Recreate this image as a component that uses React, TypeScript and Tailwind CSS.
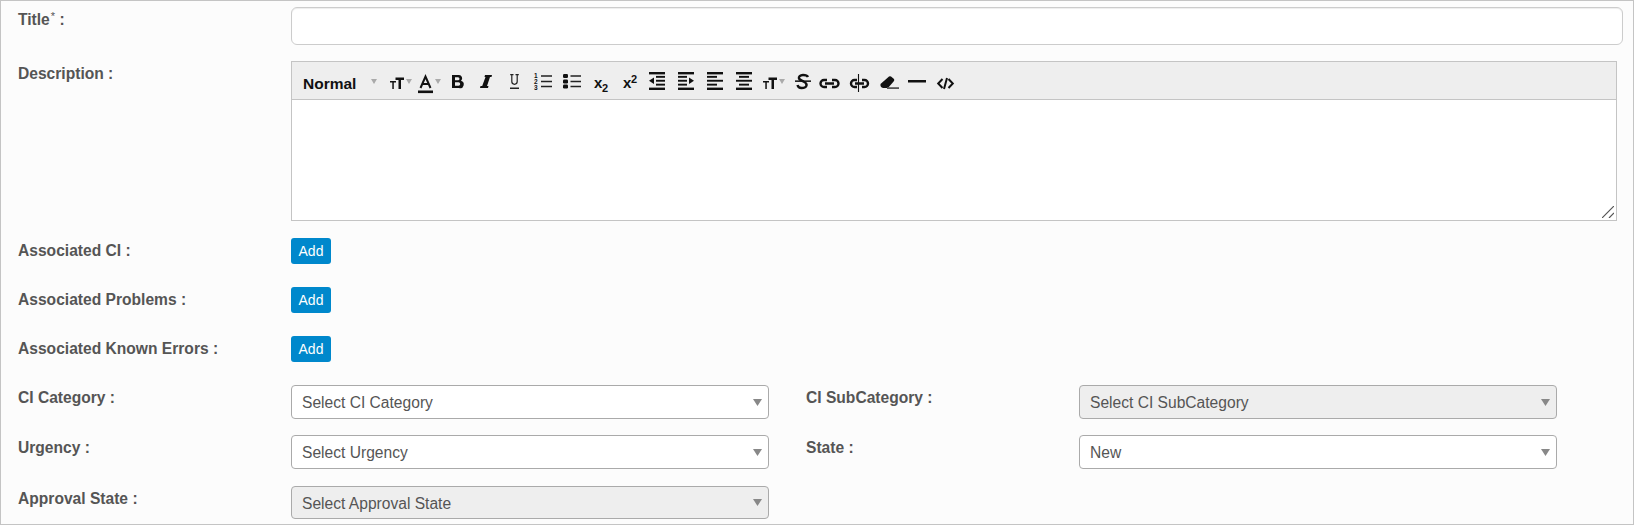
import React from "react";

const I = ({ w, className = "", children }: { w: number; className?: string; children: React.ReactNode }) => (
  <svg width={w} height="18" viewBox={`0 0 ${w} 18`} fill="none" className={`block shrink-0 overflow-visible ${className}`}>{children}</svg>
);
const Caret = ({ className = "" }: { className?: string }) => (
  <svg width="6" height="5" viewBox="0 0 6 5" className={`block shrink-0 ${className}`}><path d="M0 0h6L3 5z" fill="#aaa" /></svg>
);
const TTPaths = () => (
  <>
    <path d="M5.500 5.500H14v2.400h-3V17H8.500V7.900h-3z" fill="#111" />
    <path d="M0 9h6v1.500H3.800V17H2.300v-6.500H0z" fill="#111" />
  </>
);
const Lines = ({ rows }: { rows: [number, number][] }) => (
  <>{rows.map(([x, w], i) => <rect key={i} x={x} y={i * 3.9} width={w} height={i === 0 || i === 4 ? 2.4 : 1.9} fill="#111" />)}</>
);

const Label = ({ children, className = "" }: { children: React.ReactNode; className?: string }) => (
  <div className={`text-[15.6px] leading-[20px] font-bold text-[#555] ${className}`}>{children}</div>
);
const AddRow = ({ label, className = "" }: { label: string; className?: string }) => (
  <div className={`flex ${className}`}>
    <Label className="w-[273px] pt-[3px]">{label}</Label>
    <button className="h-[26px] w-[40px] rounded-[3px] bg-[#0088cc] text-[14px] text-white">Add</button>
  </div>
);
const Select = ({ text, disabled = false, className = "" }: { text: string; disabled?: boolean; className?: string }) => (
  <div className={`flex items-center justify-between rounded-[4px] border border-[#aaa] pl-[10px] pr-[6px] text-[15.6px] text-[#555] ${disabled ? "bg-[#eee]" : "bg-white"} ${className}`}>
    <span className="relative top-px">{text}</span>
    <svg width="9" height="7" viewBox="0 0 9 7" className="block"><path d="M0 0h9L4.500 7z" fill="#888" /></svg>
  </div>
);

export default function App() {
  return (
    <div className="h-[525px] w-[1634px] border border-[#c4c4c4] bg-[#fcfcfc] pt-[6px] pl-[17px] font-['Liberation_Sans',Arial,sans-serif]">
      <div className="flex">
        <Label className="w-[273px] pt-[3px]">
          Title<sup className="ml-px text-[11px] font-normal">*</sup> :
        </Label>
        <div className="h-[38px] w-[1332px] rounded-[6px] border border-[#ccc] bg-white shadow-[inset_0_1px_1px_rgba(0,0,0,0.075)]" />
      </div>

      <div className="mt-[16px] flex">
        <Label className="w-[273px] pt-[3px]">Description :</Label>
        <div className="h-[160px] w-[1326px] border border-[#c4c4c4] bg-white">
          <div className="flex h-[38px] items-center border-b border-[#c4c4c4] bg-[#eee] pl-[11px] pt-px">
            <span className="mt-[6px] w-[68px] shrink-0 text-[15.5px] leading-none font-bold text-[#111]">Normal</span>
            <Caret />
            <I w={14} className="ml-[13px]"><TTPaths /></I>
            <Caret className="ml-[2px]" />
            <I w={15} className="ml-[6px]">
              <path d="M2.500 16 7.500 4.500 12.500 16M4.500 12h6" stroke="#111" strokeWidth="2" />
              <rect x="0" y="18.500" width="15" height="2.600" fill="#111" />
            </I>
            <Caret className="ml-[2px]" />
            <I w={11} className="ml-[11px]">
              <path d="M0 3h6.500a3.300 3.300 0 0 1 2.500 5.800A3.600 3.600 0 0 1 7 16H0zM3 5.300v3h3a1.500 1.500 0 0 0 0-3zM3 10.300v3.400h3.500a1.700 1.700 0 0 0 0-3.400z" fill="#111" fillRule="evenodd" />
            </I>
            <I w={12} className="ml-[17px]">
              <path d="M5 3h7l-.5 2h-1.500L7 14h1.500l-.5 2H0l.5-2h1.700L5.500 5H4.500z" fill="#111" />
            </I>
            <I w={9} className="ml-[18px]">
              <path d="M.2 2.600h3.300M5.500 2.600h3.300M1.800 2.600v7a2.700 2.700 0 0 0 5.400 0v-7" stroke="#222" strokeWidth="1.200" />
              <rect x="0" y="15.500" width="9" height="1.500" fill="#222" />
            </I>
            <I w={18} className="ml-[15px]">
              <path d="M7 4h11M7 9.500h11M7 14.500h11" stroke="#222" strokeWidth="1.300" />
              <text x="0" y="5.500" fontSize="6.500" fontWeight="bold" fill="#111">1</text>
              <text x="0" y="11.500" fontSize="6.500" fontWeight="bold" fill="#111">2</text>
              <text x="0" y="17.500" fontSize="6.500" fontWeight="bold" fill="#111">3</text>
            </I>
            <I w={18} className="ml-[11px]">
              <path d="M7.500 4h10.500M7.500 9.500h10.500M7.500 14.500h10.500" stroke="#222" strokeWidth="1.300" />
              <rect x="0" y="2" width="5" height="4" rx="1.200" fill="#111" />
              <rect x="0" y="7.500" width="5" height="4" rx="1.200" fill="#111" />
              <rect x="0" y="12.500" width="5" height="4" rx="1.200" fill="#111" />
            </I>
            <I w={14} className="ml-[13px]">
              <text x="0" y="16" fontSize="15" fontWeight="bold" fill="#111">x</text>
              <text x="8" y="20" fontSize="11" fontWeight="bold" fill="#111">2</text>
            </I>
            <I w={14} className="ml-[15px]">
              <text x="0" y="16" fontSize="15" fontWeight="bold" fill="#111">x</text>
              <text x="8" y="11" fontSize="11" fontWeight="bold" fill="#111">2</text>
            </I>
            <I w={16} className="ml-[12px]">
              <Lines rows={[[0, 16], [7, 9], [7, 9], [7, 9], [0, 16]]} />
              <path d="M0 8.800 5 5.500v6.600z" fill="#111" />
            </I>
            <I w={16} className="ml-[13px]">
              <Lines rows={[[0, 16], [0, 9], [0, 9], [0, 9], [0, 16]]} />
              <path d="M16 8.800 11 5.500v6.600z" fill="#111" />
            </I>
            <I w={16} className="ml-[13px]">
              <Lines rows={[[0, 16], [0, 10], [0, 16], [0, 10], [0, 16]]} />
            </I>
            <I w={16} className="ml-[13px]">
              <Lines rows={[[0, 16], [3, 10], [0, 16], [3, 10], [0, 16]]} />
            </I>
            <I w={14} className="ml-[11px]"><TTPaths /></I>
            <Caret className="ml-[2px]" />
            <I w={16} className="ml-[10px]">
              <path d="M13 5C12 3 10 3 8 3 5 3 3.500 5 4 6.500 4.500 8 7 8.500 8.500 9.500 10.500 10.500 12 11.500 11.500 13.500 11 15.500 8.500 16 6.500 16 4.500 16 3 15 2.500 13" stroke="#111" strokeWidth="2.400" />
              <rect x="0" y="8.400" width="16" height="1.500" fill="#111" />
            </I>
            <I w={21} className="ml-[8px]">
              <path d="M8 8H5a3.500 3.500 0 0 0 0 7h3M13 8h3a3.500 3.500 0 0 1 0 7h-3M6 11.500h9" stroke="#111" strokeWidth="2.400" />
            </I>
            <I w={19} className="ml-[10px]">
              <path d="M7 8H4.500a3.500 3.500 0 0 0 0 7H7M12 8h2.500a3.500 3.500 0 0 1 0 7H12M5 11.500h9" stroke="#111" strokeWidth="2.400" />
              <path d="M8.500 2v18" stroke="#111" strokeWidth="1.100" />
            </I>
            <I w={19} className="ml-[11px]">
              <path d="M.5 12 9 4.500Q10 4 11 4.500L14 7Q14.500 8 14 9L8 16H3Q1 15.500.5 14z" fill="#111" />
              <rect x="7" y="15.200" width="12" height="1.800" fill="#555" />
            </I>
            <I w={18} className="ml-[9px]"><rect x="0" y="8" width="18" height="2.500" fill="#111" /></I>
            <I w={17} className="ml-[11px]">
              <path d="M5.500 7 1.200 11.500 5.500 16M11.500 7l4.300 4.500-4.300 4.500M10 6 7 17" stroke="#111" strokeWidth="2" />
            </I>
          </div>
          <div className="relative h-[120px]">
            <svg width="12" height="12" viewBox="0 0 12 12" className="absolute right-[2px] bottom-[2px]">
              <path d="M0 12 12 0M7 12l5-5" stroke="#555" strokeWidth="1.200" />
            </svg>
          </div>
        </div>
      </div>

      <AddRow label="Associated CI :" className="mt-[17px]" />
      <AddRow label="Associated Problems :" className="mt-[23px]" />
      <AddRow label="Associated Known Errors :" className="mt-[23px]" />

      <div className="mt-[23px] grid w-[1540px] grid-cols-[273px_478px_310px_478px] gap-y-[16px]">
        <Label className="pt-[3px]">CI Category :</Label>
        <Select text="Select CI Category" className="h-[34px]" />
        <Label className="pl-[37px] pt-[3px]">CI SubCategory :</Label>
        <Select text="Select CI SubCategory" disabled className="h-[34px]" />
        <Label className="pt-[3px]">Urgency :</Label>
        <Select text="Select Urgency" className="h-[34px]" />
        <Label className="pl-[37px] pt-[3px]">State :</Label>
        <Select text="New" className="h-[34px]" />
        <Label className="pt-[4px]">Approval State :</Label>
        <Select text="Select Approval State" disabled className="mt-px h-[33px]" />
      </div>
    </div>
  );
}
